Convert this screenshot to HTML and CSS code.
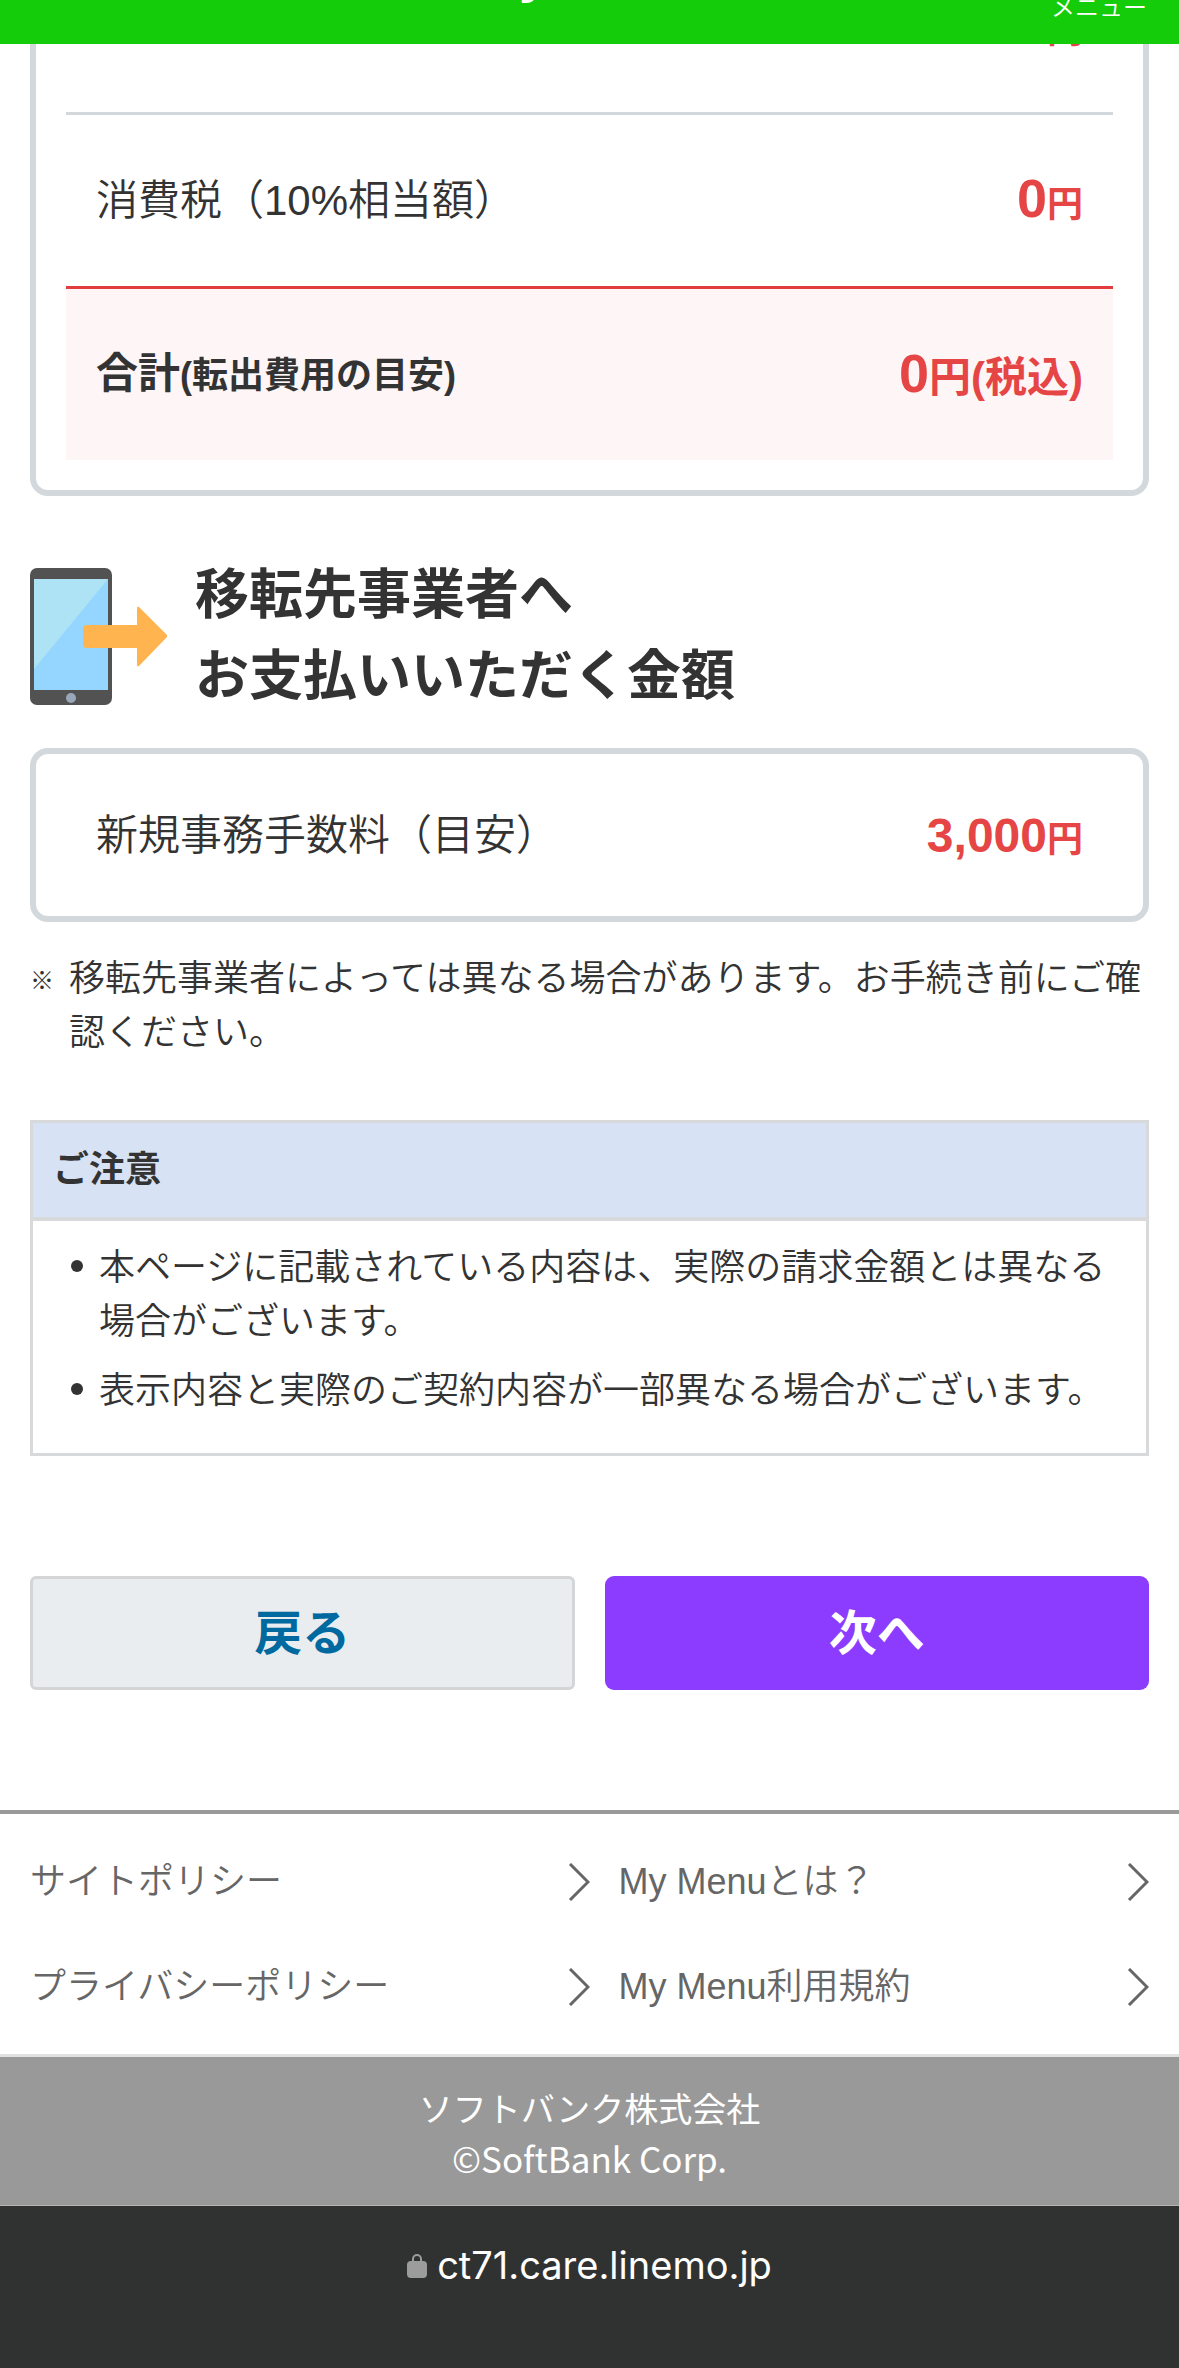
FILE: index.html
```html
<!DOCTYPE html>
<html lang="ja">
<head>
<meta charset="utf-8">
<meta name="viewport" content="width=device-width, initial-scale=1">
<title>My Menu</title>
<link rel="stylesheet" href="styles.css">
</head>
<body>
<header class="site-header">
  <span class="site-title">My Menu</span>
  <a class="menu-link" href="#menu">メニュー</a>
</header>

<main class="main">
  <section class="card charges">
    <dl class="rows">
      <div class="row row-scrolled">
        <dt></dt>
        <dd class="price"><span class="unit">円</span></dd>
      </div>
      <div class="row row-tax">
        <dt>消費税（10%相当額）</dt>
        <dd class="price"><span class="amount">0</span><span class="unit">円</span></dd>
      </div>
      <div class="row row-total">
        <dt>合計<small>(転出費用の目安)</small></dt>
        <dd class="price"><span class="amount">0</span><span class="unit unit-large">円(税込)</span></dd>
      </div>
    </dl>
  </section>

  <h2 class="heading">
    <svg class="heading-icon" viewBox="0 0 137 137" aria-hidden="true">
      <rect width="82" height="137" rx="7" fill="#525252"/>
      <rect x="4" y="11" width="74" height="111" fill="#94d6ff"/>
      <path d="M4 11h74L4 101z" fill="#ade3f4"/>
      <circle cx="41" cy="130" r="5" fill="#9aa7b8"/>
      <path d="M57 57h50V40q0-2 2-1l28 28q1 1 0 2l-28 29q-2 1-2-1V80H57q-4 0-4-4V61q0-4 4-4z" fill="#ffb450"/>
    </svg>
    <span>移転先事業者へ<br>お支払いいただく金額</span>
  </h2>

  <section class="card">
    <dl class="rows">
      <div class="row row-single">
        <dt>新規事務手数料（目安）</dt>
        <dd class="price"><span class="amount amount-small">3,000</span><span class="unit">円</span></dd>
      </div>
    </dl>
  </section>

  <p class="remark"><span class="remark-mark">※</span><span>移転先事業者によっては異なる場合があります。お手続き前にご確認ください。</span></p>

  <section class="notice">
    <h3 class="notice-title">ご注意</h3>
    <ul class="notice-list">
      <li>本ページに記載されている内容は、実際の請求金額とは異なる場合がございます。</li>
      <li>表示内容と実際のご契約内容が一部異なる場合がございます。</li>
    </ul>
  </section>

  <div class="actions">
    <button class="button button-back" type="button">戻る</button>
    <button class="button button-next" type="button">次へ</button>
  </div>
</main>

<footer>
  <nav class="footer-links">
    <a href="#site-policy">サイトポリシー<svg class="chevron" viewBox="0 0 22 38" aria-hidden="true"><path d="M2 1l18 18L2 37"/></svg></a>
    <a href="#about">My Menuとは？<svg class="chevron" viewBox="0 0 22 38" aria-hidden="true"><path d="M2 1l18 18L2 37"/></svg></a>
    <a href="#privacy">プライバシーポリシー<svg class="chevron" viewBox="0 0 22 38" aria-hidden="true"><path d="M2 1l18 18L2 37"/></svg></a>
    <a href="#terms">My Menu利用規約<svg class="chevron" viewBox="0 0 22 38" aria-hidden="true"><path d="M2 1l18 18L2 37"/></svg></a>
  </nav>
  <p class="company">ソフトバンク株式会社<span class="copyright">©SoftBank Corp.</span></p>
</footer>

<div class="address-bar">
  <svg class="lock" viewBox="0 0 20 24" aria-hidden="true">
    <rect y="7" width="20" height="17" rx="4" fill="#9c9c9c"/>
    <path d="M6 9V5a4 4 0 0 1 8 0V9" fill="none" stroke="#9c9c9c" stroke-width="2"/>
  </svg>
  <span>ct71.care.linemo.jp</span>
</div>
</body>
</html>
```
FILE: styles.css
```css
* {
  box-sizing: border-box;
}

body {
  margin: 0;
  display: flex;
  flex-direction: column;
  min-height: 100vh;
  background: #fff;
  color: #333;
  font-family: "Liberation Sans", "Noto Sans CJK JP", sans-serif;
  font-size: 36px;
  font-weight: 350;
  line-height: 54px;
}

h2, h3, p, dl, dd, ul {
  margin: 0;
  padding: 0;
}

a {
  color: inherit;
  text-decoration: none;
}

.site-header {
  position: sticky;
  top: 0;
  z-index: 1;
  height: 44px;
  padding: 0 32px;
  display: grid;
  grid-template-columns: 1fr auto 1fr;
  grid-template-rows: 100%;
  align-items: end;
  overflow: hidden;
  background: #14cc0a;
  color: #fff;
}

.site-title {
  grid-column: 2;
  padding-bottom: 44px;
  font-size: 54px;
  font-weight: 700;
  line-height: 54px;
}

.menu-link {
  justify-self: end;
  padding-bottom: 24px;
  font-size: 24px;
  line-height: 24px;
}

.main {
  padding: 0 30px 120px;
}

.card {
  padding: 0 30px;
  border: 6px solid #d2d8db;
  border-radius: 18px;
}

.charges {
  margin-top: -103px;
  padding-bottom: 30px;
  border-top: 0;
}

.row {
  display: flex;
  justify-content: space-between;
  align-items: center;
  height: 174px;
  padding: 0 30px;
  font-size: 42px;
  line-height: 63px;
}

.row-scrolled {
  height: 171px;
}

.row-tax {
  border-top: 3px solid #d2d8db;
}

.row-total {
  border-top: 3px solid #e23c3c;
  background: #fdf5f6;
  font-weight: 700;
}

.row-single {
  height: 162px;
}

.row small {
  font-size: 36px;
}

.price {
  padding-top: 2px;
  color: #e64545;
  font-size: 54px;
  font-weight: 700;
}

.amount-small {
  font-size: 48px;
}

.unit {
  font-size: 36px;
}

.unit-large {
  font-size: 42px;
}

.heading {
  display: flex;
  align-items: center;
  gap: 28px;
  margin: 59px 0 31px;
  font-size: 54px;
  font-weight: 700;
  line-height: 81px;
}

.heading-icon {
  flex: none;
  width: 137px;
  height: 137px;
}

.remark {
  display: flex;
  margin-top: 30px;
}

.remark-mark {
  flex: none;
  width: 39px;
  padding-top: 2px;
  font-size: 24px;
  font-weight: 700;
}

.notice {
  margin-top: 60px;
  border: 3px solid #d7d9db;
}

.notice-title {
  padding: 20px;
  border-bottom: 4px solid #d7d9db;
  background: #d7e2f4;
  font-size: 36px;
  font-weight: 700;
}

.notice-list {
  display: grid;
  gap: 15px;
  padding: 20px 24px 35px 38px;
  list-style: none;
}

.notice-list li {
  display: flex;
  gap: 16px;
}

.notice-list li::before {
  content: "";
  flex: none;
  width: 12px;
  height: 12px;
  margin-top: 19px;
  border-radius: 50%;
  background: #333;
}

.actions {
  display: grid;
  grid-template-columns: 1fr 1fr;
  gap: 30px;
  margin-top: 120px;
}

.button {
  height: 114px;
  padding: 0 0 8px;
  border: 0;
  border-radius: 9px;
  font-family: inherit;
  font-size: 48px;
  font-weight: 700;
}

.button-back {
  border: 3px solid #d3d5d7;
  border-radius: 6px;
  background: #e9edf0;
  color: #0069a0;
}

.button-next {
  background: #8c3cff;
  color: #fff;
}

.footer-links {
  display: grid;
  grid-template-columns: 1fr 1fr;
  padding: 15px 30px;
  border-top: 4px solid #999;
  border-bottom: 3px solid #e0e0e0;
  color: #666;
}

.footer-links a {
  display: flex;
  justify-content: space-between;
  align-items: center;
  height: 105px;
}

.footer-links a:nth-child(even) {
  padding-left: 29px;
}

.chevron {
  flex: none;
  width: 22px;
  height: 38px;
  fill: none;
  stroke: #666;
  stroke-width: 3px;
}

.company {
  padding: 26px 30px 22px;
  border-bottom: 1px solid #b4b4b4;
  background: #999;
  color: #fff;
  font-family: "Noto Sans CJK JP", sans-serif;
  font-size: 34px;
  font-weight: 400;
  line-height: 50px;
  text-align: center;
}

.copyright {
  display: block;
  font-size: 35px;
}

.address-bar {
  flex: 1;
  display: flex;
  justify-content: center;
  align-items: flex-start;
  gap: 10px;
  min-height: 162px;
  padding-top: 32px;
  background: #303231;
  color: #fff;
  font-family: Inter, sans-serif;
  font-size: 38px;
  font-weight: 400;
}

.lock {
  width: 20px;
  height: 24px;
  margin-top: 16px;
}
```
